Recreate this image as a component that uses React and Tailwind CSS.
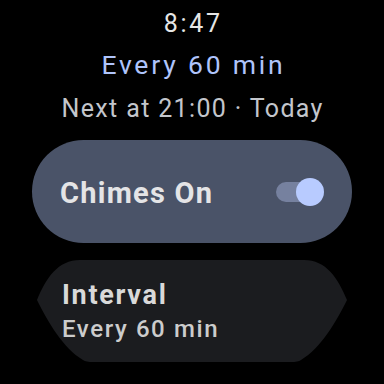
export default function App() {
  return (
    <div className="w-[384px] h-[384px] bg-black overflow-hidden flex flex-col items-center" style={{ fontFamily: "Roboto, 'Noto Sans', sans-serif" }}>
      <div className="mt-[9px] h-[30px] text-[25px] leading-[30px] text-[#e6e6e6] tracking-[2.7px] pl-[2.7px]">8:47</div>
      <div className="mt-[11px] h-[30px] text-[26.5px] leading-[30px] text-[#afc4fb] tracking-[2.8px] pl-[2.8px]">Every 60 min</div>
      <div className="mt-[13.5px] h-[30px] text-[25px] leading-[30px] text-[#c3c6cc] tracking-[1.35px] pl-[1.35px]">Next at 21:00 · Today</div>
      <div className="mt-[16.5px] w-[320px] h-[103px] shrink-0 rounded-full bg-[#4a5368] flex items-center justify-between pl-[28px] pr-[28px]">
        <span className="mt-[3px] text-[29px] leading-[34px] font-bold text-[#e4e4e6] tracking-[1.25px]">Chimes On</span>
        <div className="relative w-[48px] h-[28px] flex items-center">
          <div className="w-[40px] h-[20px] rounded-full bg-[#76819f]"></div>
          <div className="absolute right-0 top-0 w-[28px] h-[28px] rounded-full bg-[#b8cbff]"></div>
        </div>
      </div>
      <div className="relative mt-[17px] w-[312px] h-[102px] shrink-0 flex flex-col self-start ml-[36px] pl-[26px] pt-[20px]">
        <svg className="absolute inset-0" width="312" height="102" viewBox="0 0 312 102">
          <path d="M44 0 H268 C290 0 302 18 311 40 C300 62 285 88 265 100 Q262 102 255 102 H57 Q50 102 47 100 C27 88 12 62 1 40 C10 18 22 0 44 0 Z" fill="#1b1c1f" />
        </svg>
        <span className="relative h-[30px] text-[27px] leading-[30px] font-bold text-[#d9d9d9] tracking-[1.7px]">Interval</span>
        <span className="relative mt-[5px] h-[28px] text-[24px] leading-[28px] font-medium text-[#cccccc] tracking-[1.6px]">Every 60 min</span>
      </div>
    </div>
  );
}
